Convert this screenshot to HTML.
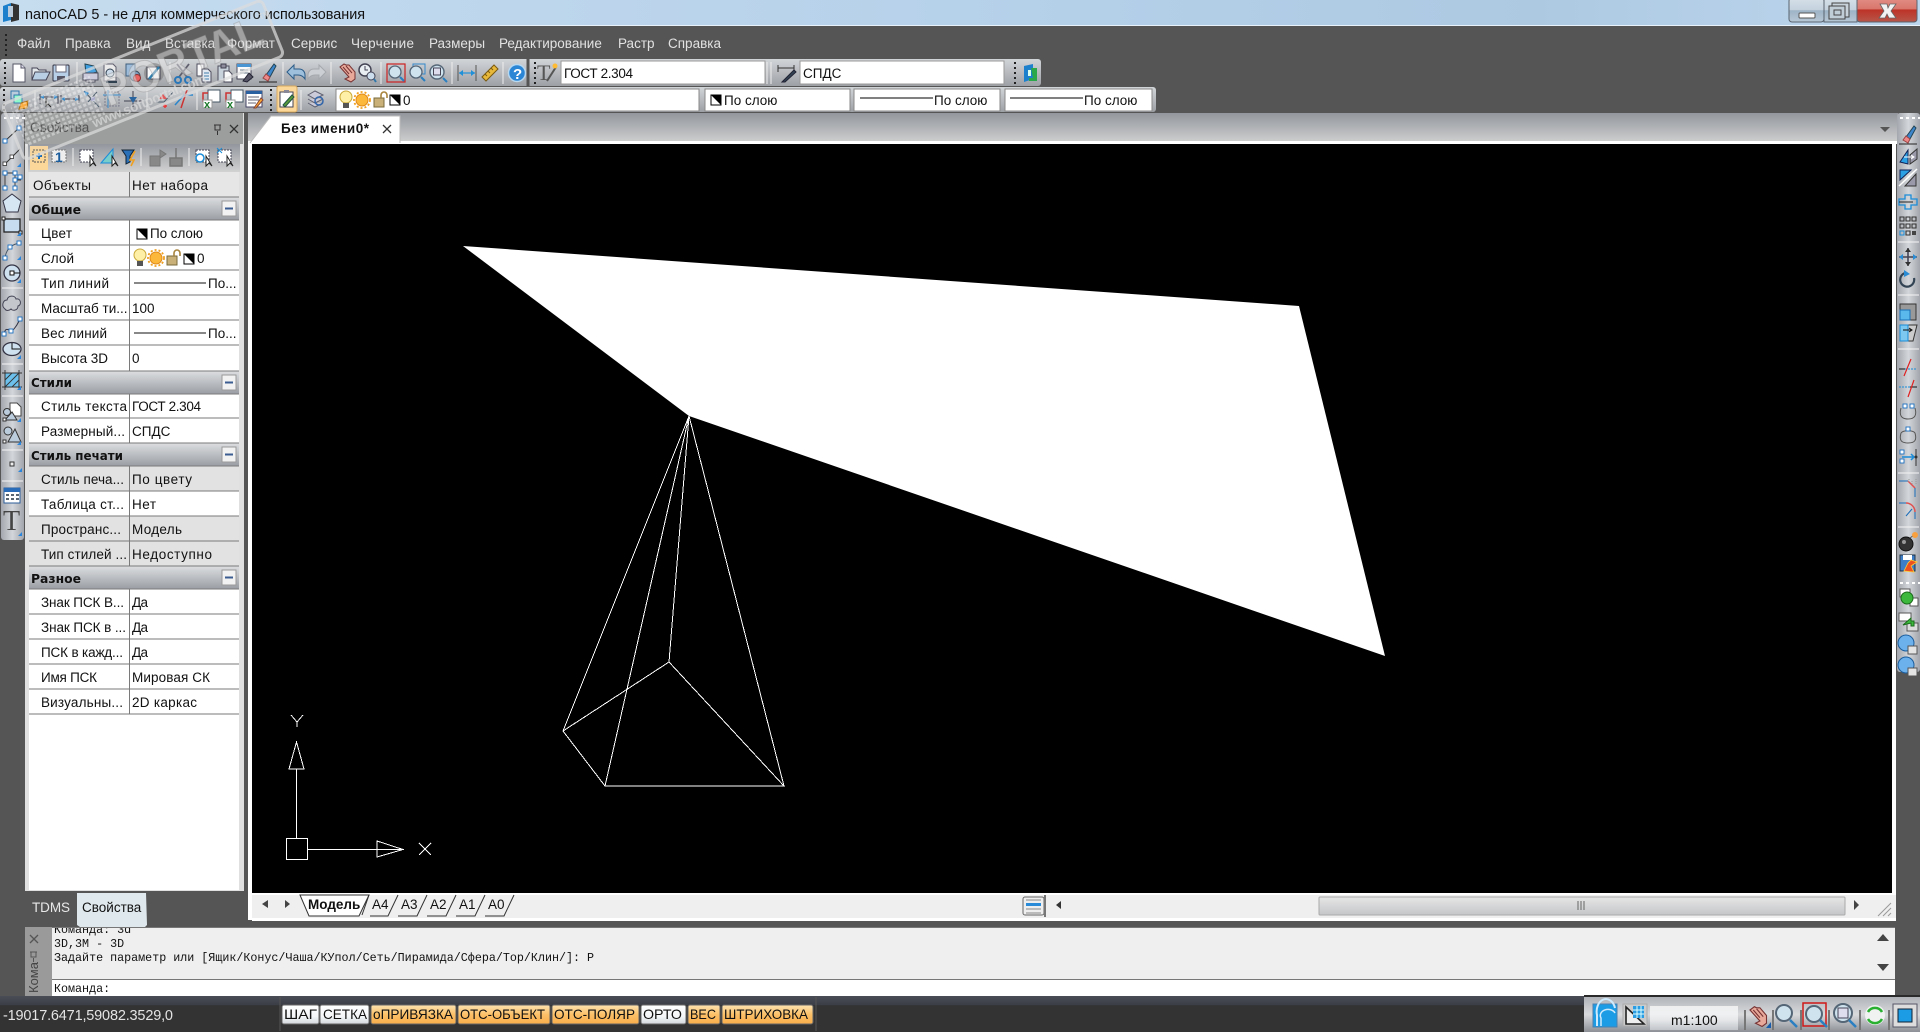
<!DOCTYPE html>
<html lang="ru"><head><meta charset="utf-8"><title>nanoCAD 5</title>
<style>
html,body{margin:0;padding:0;background:#555;overflow:hidden}
svg{display:block;position:absolute;left:0;top:0}
text{font-family:"Liberation Sans","Noto Sans CJK SC",sans-serif;font-size:13.5px;fill:#111}
.m{fill:#e2e2e2;font-size:13.5px}
.h{font-family:"DejaVu Sans",sans-serif;font-weight:bold;font-size:12.5px;fill:#111}
.c{font-family:"Liberation Mono",monospace;font-size:11.7px;fill:#111}
.s{font-size:14px;fill:#111}
.w{stroke:#fff;fill:none;stroke-width:1}
</style></head><body>
<svg width="1920" height="1032" viewBox="0 0 1920 1032" xmlns="http://www.w3.org/2000/svg">
<defs>
<linearGradient id="tb" x1="0" y1="0" x2="0" y2="1"><stop offset="0" stop-color="#d2d5d8"/><stop offset="1" stop-color="#9da0a5"/></linearGradient>
<linearGradient id="vb" x1="0" y1="0" x2="1" y2="0"><stop offset="0" stop-color="#a4a8ae"/><stop offset=".5" stop-color="#d3d6da"/><stop offset="1" stop-color="#a2a6ac"/></linearGradient>
<linearGradient id="dt" x1="0" y1="0" x2="0" y2="1"><stop offset="0" stop-color="#93979d"/><stop offset="1" stop-color="#d2d2d2"/></linearGradient>
<linearGradient id="hd" x1="0" y1="0" x2="0" y2="1"><stop offset="0" stop-color="#dcdee0"/><stop offset="1" stop-color="#9a9ea4"/></linearGradient>
<linearGradient id="or" x1="0" y1="0" x2="0" y2="1"><stop offset="0" stop-color="#fde3b0"/><stop offset=".5" stop-color="#fbc068"/><stop offset="1" stop-color="#f9ae4a"/></linearGradient>
<linearGradient id="wh" x1="0" y1="0" x2="0" y2="1"><stop offset="0" stop-color="#fff"/><stop offset=".6" stop-color="#f4f6f8"/><stop offset="1" stop-color="#d4d8dc"/></linearGradient>
<linearGradient id="cl" x1="0" y1="0" x2="0" y2="1"><stop offset="0" stop-color="#e28f86"/><stop offset=".45" stop-color="#d9766c"/><stop offset=".5" stop-color="#bd3328"/><stop offset="1" stop-color="#b8564a"/></linearGradient>
<linearGradient id="wb" x1="0" y1="0" x2="0" y2="1"><stop offset="0" stop-color="#d6e0e8"/><stop offset=".5" stop-color="#c4d2de"/><stop offset=".52" stop-color="#9db3c6"/><stop offset="1" stop-color="#b8c8d6"/></linearGradient>
<linearGradient id="ti" x1="0" y1="0" x2="1" y2="0"><stop offset="0" stop-color="#c6dcef"/><stop offset=".5" stop-color="#b6d1ea"/><stop offset=".8" stop-color="#adc9e2"/><stop offset="1" stop-color="#bcd6ed"/></linearGradient>
<linearGradient id="st" x1="0" y1="0" x2="0" y2="1"><stop offset="0" stop-color="#4a4d55"/><stop offset=".25" stop-color="#3b3e46"/><stop offset=".26" stop-color="#333"/><stop offset="1" stop-color="#333"/></linearGradient>
<linearGradient id="sr" x1="0" y1="0" x2="0" y2="1"><stop offset="0" stop-color="#b0b3b8"/><stop offset=".5" stop-color="#d8dadc"/><stop offset="1" stop-color="#8d9096"/></linearGradient>
<linearGradient id="sc" x1="0" y1="0" x2="0" y2="1"><stop offset="0" stop-color="#e6e6e6"/><stop offset="1" stop-color="#c4c6c8"/></linearGradient>
<pattern id="dots" width="5" height="5" patternUnits="userSpaceOnUse"><rect width="3" height="3" fill="#fff" opacity=".7"/></pattern>

<g id="doc"><path d="M-6-9H2L6-5V9H-6Z" fill="#fff" stroke="#556"/><path d="M2-9V-5H6" fill="#dde" stroke="#556"/></g>
<g id="open"><path d="M-9 7V-5H-4L-2-3H5V0" fill="#e5e8ea" stroke="#445"/><path d="M-9 7L-6-1H9L5 7Z" fill="#b9cfe4" stroke="#445"/></g>
<g id="save"><rect x="-8" y="-8" width="16" height="16" rx="1" fill="#b8cfe8" stroke="#334"/><rect x="-5" y="-8" width="10" height="7" fill="#fff" stroke="#667"/><rect x="-4" y="3" width="8" height="5" fill="#556"/></g>
<g id="print"><path d="M-6-9L3-7 6-1-5 2Z" fill="#3d9ee0" stroke="#245"/><rect x="-8" y="0" width="15" height="7" fill="#ccd" stroke="#445"/><path d="M-5 7H4V9H-5Z" fill="#fff" stroke="#445"/></g>
<g id="prev"><path d="M-6-9H3L6-6V8H-6Z" fill="#eee" stroke="#556"/><circle cx="0" cy="0" r="4" fill="#cde" stroke="#234"/><path d="M-4 9H7" stroke="#234" stroke-width="2"/></g>
<g id="pub"><rect x="-7" y="-9" width="9" height="12" fill="#9bd" stroke="#357"/><circle cx="2" cy="3" r="5" fill="#79b" stroke="#345"/><circle cx="4" cy="5" r="3.5" fill="#e55" stroke="#822"/></g>
<g id="plot"><circle r="10" fill="#777" opacity=".6"/><rect x="-7" y="-6" width="13" height="12" fill="#fff" stroke="#334"/><path d="M-5 6L5-6" stroke="#27a" stroke-width="2.5"/></g>
<g id="cut"><path d="M-6-9L4 4M6-9L-4 4" stroke="#556" stroke-width="1.8" fill="none"/><circle cx="-5" cy="7" r="3" fill="none" stroke="#1a70b8" stroke-width="2"/><circle cx="5" cy="7" r="3" fill="none" stroke="#1a70b8" stroke-width="2"/></g>
<g id="copy"><path d="M-7-9H0V3H-7Z" fill="#fff" stroke="#445"/><path d="M-2-4H4L7-1V9H-2Z" fill="#e6eef6" stroke="#445"/><path d="M0 0H5M0 3H5M0 6H5" stroke="#37a"/></g>
<g id="paste"><rect x="-7" y="-7" width="11" height="15" fill="#c9d3dd" stroke="#445"/><rect x="-4" y="-9" width="5" height="4" fill="#889" stroke="#334"/><path d="M-1-2H4L7 1V9H-1Z" fill="#fff" stroke="#445"/></g>
<g id="match"><rect x="-8" y="-9" width="14" height="15" fill="#fff" stroke="#445"/><rect x="-8" y="-9" width="14" height="3" fill="#3d8fd4"/><path d="M-5-3H3M-5 0H3" stroke="#678"/><path d="M-2 8L4 0 8 4 2 9Z" fill="#556" stroke="#223"/></g>
<g id="brush"><path d="M-2 2L6-9 8-7 2 4Z" fill="#3d86cc" stroke="#245"/><path d="M-5 5L-2 1 2 4 0 8Z" fill="#e88" stroke="#944"/><path d="M-9 9H9" stroke="#222"/></g>
<g id="undo"><path d="M-9-1L-2-8V-4H3C7-4 9-1 9 2V6C7 3 5 2 2 2H-2V6Z" fill="#9fc0dc" stroke="#2c5c88"/></g>
<g id="redo"><path d="M9-1L2-8V-4H-3C-7-4-9-1-9 2V6C-7 3-5 2-2 2H2V6Z" fill="#ccd0d4" stroke="#a5a9ae"/></g>
<g id="pan"><path d="M-7-6L2 4 -2 6 4 9 8 6 8-1 2-8-1-8-3-9Z" fill="#e8a89a" stroke="#733"/><path d="M-4-6L2 1M-1-7L5 0" stroke="#733"/></g>
<g id="zrt"><circle cx="-2" cy="-3" r="6" fill="#e8eef2" stroke="#445" stroke-width="1.5"/><path d="M-2-7V-3H1" stroke="#445" fill="none"/><circle cx="4" cy="3" r="4" fill="#cde" stroke="#445"/><path d="M7 6L9 9" stroke="#37a" stroke-width="2"/></g>
<g id="zw"><rect x="-9" y="-9" width="18" height="18" fill="none" stroke="#c22" stroke-width="1.2"/><circle cx="-1" cy="-1" r="6" fill="#cfe3ef" stroke="#567" stroke-width="1.3"/><path d="M4 4L8 8" stroke="#2a7fc0" stroke-width="2"/></g>
<g id="zp"><rect x="-4" y="-9" width="12" height="10" fill="none" stroke="#38c"/><circle cx="-1" cy="-1" r="6" fill="#cfe3ef" stroke="#567" stroke-width="1.3"/><path d="M4 4L8 8" stroke="#2a7fc0" stroke-width="2"/></g>
<g id="ze"><circle cx="-1" cy="-1" r="7" fill="#cfe3ef" stroke="#567" stroke-width="1.4"/><rect x="-4.500" y="-5" width="7" height="7" fill="#dde" stroke="#445"/><path d="M5 5L9 9" stroke="#2a7fc0" stroke-width="2"/></g>
<g id="dist"><path d="M-9-8V8M9-8V8" stroke="#555"/><path d="M-8 0H8" stroke="#2090d8" stroke-width="1.200"/><path d="M-8 0L-4-3V3ZM8 0L4-3V3Z" fill="#2090d8"/></g>
<g id="ruler"><path d="M-8 4L4-8 8-4-4 8Z" fill="#e8b83a" stroke="#7a5a12"/><path d="M-5 1L-3 3M-2-2L0 0M1-5L3-3" stroke="#7a5a12"/></g>
<g id="help"><circle r="8.500" fill="#2c86d6" stroke="#b8d8f0" stroke-width="1.500"/><text x="-4" y="6" style="font-size:15px;font-weight:bold;fill:#fff">?</text></g>
<g id="tstyle"><text x="-10" y="7" style="font-family:'Liberation Serif',serif;font-size:22px;fill:#555">T</text><path d="M0 8L9-6" stroke="#555" stroke-width="2"/><circle cx="8" cy="-7" r="2.500" fill="#fb3"/></g>
<g id="dstyle"><path d="M-9-8V-1M7-8V-1M-9-5H7" stroke="#333" fill="none"/><path d="M-5 9L7-3 9-1-2 9Z" fill="#345" stroke="#223"/></g>
<g id="ncad"><path d="M-6-7L3-9V6L-6 9Z" fill="#1c80cc"/><path d="M1-5H7V8H-1V5H3Z" fill="#2aa84a"/><rect x="-2" y="-3" width="3" height="6" fill="#dfe"/></g>
<g id="layers"><rect x="-8" y="-9" width="8" height="8" fill="#bcd" stroke="#37a"/><rect x="-5" y="-5" width="8" height="8" fill="#8fc" stroke="#37a"/><path d="M2 3L9 1 8 8 0 9Z" fill="#fa3" stroke="#a60"/></g>
<g id="d1"><path d="M-9-5V5M9-5V5M-9 -2H9" stroke="#334" fill="none"/><path d="M-9-2L-5-4V0ZM9-2L5-4V0Z" fill="#2a86cc"/><path d="M-3-1V7L-1 5 2 8" stroke="#111" fill="#ccc"/></g>
<g id="d2"><path d="M-9-4V4M9-4V4M-9 0H9" stroke="#334" fill="none"/><path d="M-9 0L-5-2V2ZM9 0L5-2V2Z" fill="#2a86cc"/></g>
<g id="d3"><path d="M-8-8L7 8M-4 3L5-7" stroke="#456" fill="none"/><path d="M-8-8L-3-6-6-3Z" fill="#2a86cc"/><rect x="-1" y="-2" width="4" height="4" fill="#aac"/></g>
<g id="d4"><rect x="-7" y="-7" width="14" height="14" fill="none" stroke="#778" stroke-dasharray="2 1"/><path d="M-9-4H9M-4-9V9" stroke="#2a86cc"/></g>
<g id="d5"><path d="M-9 2H9M0-8V8" stroke="#334" fill="none"/><path d="M-4-2L4-2 0 4Z" fill="#1c5c9c"/></g>
<g id="d6"><path d="M-9 3H-1L8-7" stroke="#456" fill="none"/><path d="M-2-5L2 0-6 0Z" fill="#e33" opacity=".8"/><path d="M0 5V9M-2 7H2" stroke="#e33" stroke-width="1.500"/></g>
<g id="d7"><path d="M-9 6L0-4 9-4" stroke="#2a86cc" fill="none" stroke-width="1.500"/><path d="M3-9L-3 9" stroke="#c33" stroke-width="1.500"/></g>
<g id="xl"><rect x="-4" y="-9" width="12" height="12" fill="#fff" stroke="#456"/><path d="M-9 3V-6H-4" stroke="#c33" fill="none" stroke-width="1.500"/><rect x="-9" y="1" width="9" height="8" fill="#fff" stroke="#999"/><text x="-8" y="9" style="font-size:11px;font-weight:bold;fill:#1a7a2a">x</text></g>
<g id="tb1"><rect x="-8" y="-8" width="16" height="16" fill="#fff" stroke="#446"/><rect x="-8" y="-8" width="16" height="3" fill="#2a60a0"/><path d="M-6-2H5M-6 1H5M-6 4H2" stroke="#667"/><path d="M0 9L7-1 9 1 2 9Z" fill="#fa3" stroke="#843"/></g>
<g id="note"><rect x="-10" y="-13" width="20" height="26" rx="2" fill="#fbd89a" stroke="#d8a860"/><rect x="-7" y="-7" width="13" height="15" fill="#fff" stroke="#445"/><rect x="-3" y="-9" width="5" height="3" fill="#889"/><path d="M-4 6L5-4 7-2-2 8Z" fill="#5a9a3a" stroke="#254"/></g>
<g id="lst"><path d="M-7-4L0-8 8-4 0 0Z M-7 0L0 4 8 0 M-7 4L0 8 8 4" fill="#ccd" stroke="#556" opacity=".9"/><circle cx="4" cy="2" r="4" fill="none" stroke="#3366aa" stroke-width="1.500"/></g>
<g id="bulb"><circle cy="-3" r="6" fill="#fff0a8" stroke="#c8a838"/><rect x="-3" y="3" width="6" height="5" fill="#555"/></g>
<g id="sun"><circle r="6" fill="#fbb83a" stroke="#e08818"/><circle r="8" fill="none" stroke="#f0a020" stroke-width="1.800" stroke-dasharray="2 2"/></g>
<g id="lock"><rect x="-6" y="-2" width="10" height="9" fill="#c8b078" stroke="#7a6a3a"/><path d="M1-2V-5A3 3 0 0 1 7-5V-2" fill="none" stroke="#a8843c" stroke-width="1.600"/></g>
<g id="cs"><rect x="-5" y="-5" width="10" height="10" fill="#fff" stroke="#000"/><path d="M-5-5H5V5Z" fill="#000"/></g>
<g id="gripV"><path d="M0 0V2M0 5V7M0 10V12M0 15V17M0 20V22" stroke="#222" stroke-width="2"/></g>
<g id="gripH"><path d="M0 0H3M6 0H9M12 0H15M18 0H21" stroke="#fff" stroke-width="2"/></g>
<g id="pt"><rect x="-2" y="-2" width="4" height="4" fill="#fff" stroke="#1b6fc0" stroke-width=".9"/></g>
<g id="corn"><path d="M0 0L-4 0 0-4Z" fill="#2a86dc" transform="translate(9,10)"/></g>

<g id="l-line"><path d="M-7 7L7-6" stroke="#333"/><use href="#pt" x="-7" y="7"/><use href="#pt" x="7" y="-6"/></g>
<g id="l-ray"><path d="M-7 7L8-8" stroke="#333"/><rect x="-9" y="5" width="3.500" height="3.500" fill="#fff" stroke="#333" stroke-width=".8"/><rect x="-2" y="-2" width="3.500" height="3.500" fill="#fff" stroke="#333" stroke-width=".8"/><use href="#corn"/></g>
<g id="l-pl"><path d="M-7 8V-7H3V0H9M3 0V8" fill="none" stroke="#333" stroke-width=".9"/><use href="#pt" x="-7" y="8"/><use href="#pt" x="-7" y="-7"/><use href="#pt" x="3" y="-7"/><use href="#pt" x="3" y="0"/><use href="#pt" x="8" y="-3"/><use href="#pt" x="3" y="8"/></g>
<g id="l-poly"><path d="M0-9L9-2 6 9H-6L-9-2Z" fill="#d6e6f2" stroke="#334"/></g>
<g id="l-rect"><rect x="-8" y="-7" width="16" height="13" fill="#c8dcef" stroke="#222" stroke-width="1.300"/><rect x="-10" y="-9" width="3" height="3" fill="#fff" stroke="#222"/><rect x="7" y="5" width="3" height="3" fill="#fff" stroke="#222"/><use href="#corn"/></g>
<g id="l-arc"><path d="M-7 8C-6-1 0-6 8-7" fill="none" stroke="#456" stroke-width=".9"/><use href="#pt" x="-7" y="8"/><use href="#pt" x="-2" y="-3"/><use href="#pt" x="7" y="-7"/><use href="#corn"/></g>
<g id="l-cir"><circle r="8" fill="#cfe0ee" stroke="#334" stroke-width="1.300"/><path d="M0 0H8" stroke="#111"/><rect x="-2" y="-2" width="4" height="4" fill="#fff" stroke="#111"/><use href="#corn"/></g>
<g id="l-cloud"><path d="M-7 6C-11 3-9-3-5-3-4-8 3-8 4-4 9-5 10 2 6 3 6 8 0 8-1 6-3 8-6 8-7 6Z" fill="#c4c8cc" stroke="#445"/></g>
<g id="l-spl"><path d="M-8 8C-6-2-2 8 2 3S6-3 8-7" fill="none" stroke="#334"/><use href="#pt" x="-8" y="8"/><use href="#pt" x="-1" y="5"/><use href="#pt" x="8" y="-7"/></g>
<g id="l-ell"><ellipse rx="9" ry="6.500" fill="#cfe0ee" stroke="#334" stroke-width="1.300"/><path d="M0-6V0H8" stroke="#111" fill="none"/><use href="#corn"/></g>
<g id="l-hat"><rect x="-7" y="-7" width="14" height="14" fill="#6cc0ec" stroke="#222"/><path d="M-7 0L0-7M-7 7L7-7M0 7L7 0M-10-7H10M-10 7H10M-7-10V10M7-10V10" stroke="#333" stroke-width=".9"/><use href="#corn"/></g>
<g id="l-blk"><path d="M-2-9H5L9-5V4H-2Z" fill="#fff" stroke="#444"/><circle cx="-5" cy="0" r="3.500" fill="#bcd" stroke="#333"/><path d="M-7 8L0 0 5 8Z" fill="#bcd" stroke="#333"/><rect x="-9" y="6" width="3" height="3" fill="#fff" stroke="#333"/><use href="#corn"/></g>
<g id="l-ins"><circle cx="-4" cy="-4" r="4" fill="#bcd" stroke="#333"/><path d="M-4 7L3-6 9 7Z" fill="#bcd" stroke="#333"/><rect x="-9" y="5" width="3" height="3" fill="#fff" stroke="#333"/><use href="#corn"/></g>
<g id="l-tab"><rect x="-8" y="-8" width="16" height="15" fill="#fff" stroke="#2a5c9a"/><rect x="-8" y="-8" width="16" height="4" fill="#2a6cb8"/><path d="M-6-1H-3M-1-1H2M4-1H7M-6 3H-3M-1 3H2M4 3H7" stroke="#234" stroke-width="1.500"/></g>

<g id="r-mir"><path d="M-8 5L0-7V7Z" fill="#2ba0e4" stroke="#125"/><path d="M9-8L2-2V7L9 2Z" fill="#99a" stroke="#333"/><path d="M-4 0H6M3-2L6 0 3 2" stroke="#fff" fill="none"/></g>
<g id="r-off"><path d="M-8 2L3-8H-8Z" fill="#2ba0e4" stroke="#125"/><path d="M8-4L-3 8H8Z" fill="#99a" stroke="#333"/><path d="M-9 8L9-9" stroke="#fff" stroke-width="1.500"/></g>
<g id="r-cp"><path d="M-9-3H-3V-7H3V-3H9V3H3V7H-3V3H-9Z" fill="none" stroke="#1a8cd8" stroke-width="1.300"/><path d="M-9 0H5" stroke="#222"/></g>
<g id="r-arr"><path d="M-8-8h4v4h-4ZM-2-8h4v4h-4ZM4-8h4v4h-4ZM-8-1h4v4h-4ZM-2-1h4v4h-4ZM4-1h4v4h-4ZM-2 6h4v4h-4Z" fill="none" stroke="#333" transform="translate(0,-1)" stroke-width="1.100"/><rect x="-8" y="5" width="4" height="4" fill="none" stroke="#1a8cd8"/><rect x="4" y="5" width="4" height="4" fill="#444"/></g>
<g id="r-mv"><path d="M-9 0H9M0-9V9" stroke="#445" stroke-width="1.600"/><path d="M-9 0L-5-3V3ZM9 0L5-3V3Z" fill="#2a8cd4"/><path d="M0-9L-3-5H3ZM0 9L-3 5H3Z" fill="#333"/></g>
<g id="r-rot"><path d="M-3-7A7 7 0 1 0 6-2" fill="none" stroke="#345" stroke-width="2.200"/><path d="M-4-10V-3L2-6Z" fill="#2a8cd4"/></g>
<g id="r-sc"><rect x="-8" y="-8" width="16" height="16" fill="#999" stroke="#333"/><rect x="-8" y="-2" width="10" height="10" fill="#5ab8ec" stroke="#1a70b8"/></g>
<g id="r-str"><path d="M-8-8H9L5 8H-8Z" fill="#ccc" stroke="#333"/><rect x="-8" y="-8" width="8" height="16" fill="#7cc8f0" stroke="#1a8cd8"/><path d="M-5-3H4M1-5L4-3 1-1" stroke="#111" fill="none"/></g>
<g id="r-trim"><path d="M-9 2H-3" stroke="#111"/><path d="M-3 2H9" stroke="#1a8cd8" stroke-dasharray="2 1"/><path d="M-4 9L3-8" stroke="#e02020" stroke-width="1.200"/></g>
<g id="r-ext"><path d="M-9-1H2" stroke="#1a8cd8" stroke-dasharray="2 1"/><path d="M2-1H9" stroke="#111"/><path d="M0 9L6-8" stroke="#e02020" stroke-width="1.200"/></g>
<g id="r-br1"><path d="M-7-4C-9 3-7 7 0 7S9 3 7-4" fill="none" stroke="#555"/><use href="#pt" x="-3" y="-6"/><use href="#pt" x="4" y="-6"/></g>
<g id="r-br2"><path d="M-7-2C-9 5-7 8 0 8S9 5 7-2C5-5-5-5-7-2" fill="none" stroke="#555"/><use href="#pt" x="0" y="-6"/></g>
<g id="r-join"><path d="M8-8V9" stroke="#333"/><path d="M-6 0H6M3-3L6 0 3 3" stroke="#1a8cd8" stroke-width="1.500" fill="none"/><use href="#pt" x="-6" y="-5"/><use href="#pt" x="-6" y="4"/><circle cx="8" cy="0" r="1.500" fill="#333"/></g>
<g id="r-cha"><path d="M-9-7H0" stroke="#1a6cb8"/><path d="M0-7L7 0" stroke="#e05050" stroke-width="1.500"/><path d="M7 0V9" stroke="#1a6cb8"/><path d="M1-9V-5M4-7V-3M8-9V-4" stroke="#999" stroke-dasharray="1 1"/></g>
<g id="r-fil"><path d="M-9-7H-2" stroke="#1a6cb8"/><path d="M-2-7A9 9 0 0 1 7 2" stroke="#e05050" fill="none" stroke-width="1.500"/><path d="M7 2V9" stroke="#1a6cb8"/><path d="M-2 6L4-1" stroke="#1a6cb8"/></g>
<g id="r-bomb"><circle cx="-2" cy="2" r="7" fill="#333" stroke="#111"/><circle cx="-4" cy="0" r="2" fill="#999"/><path d="M2-4L6-7" stroke="#555"/><circle cx="7" cy="-7" r="3" fill="#f8a040"/></g>
<g id="r-exp"><rect x="-8" y="-8" width="15" height="16" fill="#3d7ec8" stroke="#234"/><rect x="-5" y="-8" width="9" height="5" fill="#fff"/><path d="M-4 8L0 0 3-3 9-1 3 3 6 9Z" fill="#ec5020" stroke="#fc3" stroke-width=".8"/></g>
<g id="r-g1"><rect x="-8" y="-9" width="10" height="8" fill="#fff" stroke="#555"/><rect x="2" y="0" width="8" height="8" fill="#fff" stroke="#555"/><circle cx="-1" cy="0" r="6" fill="#3cb83c" stroke="#1a6a1a"/></g>
<g id="r-g2"><rect x="-9" y="-9" width="12" height="8" fill="#fff" stroke="#555"/><rect x="-1" y="1" width="11" height="8" fill="#ddd" stroke="#555"/><path d="M-5 3L3-4V-1H6V4H3V1Z" fill="#3cb83c" stroke="#1a6a1a"/></g>
<g id="r-b1"><circle cx="-2" cy="-2" r="8" fill="#6cb0ec" stroke="#1a5c9c"/><rect x="0" y="1" width="9" height="8" fill="#e4e4e4" stroke="#555"/></g>

<g id="ts-mod"><rect x="-12" y="-11" width="24" height="23" fill="#1c9ce4" stroke="#4a80b0"/><path d="M-8 11V0A6 8 0 0 1 10-7" fill="none" stroke="#cfeafc" stroke-width="2"/><path d="M-4 11V3A5 4 0 0 1 10-2" fill="none" stroke="#cfeafc" stroke-width="1.500"/></g>
<g id="ts-grid"><rect x="-12" y="-11" width="24" height="22" fill="#ccc" stroke="#aaa"/><path d="M-9-8V9H9Z" fill="#eee" stroke="#222" stroke-width="1.600"/><rect x="-2" y="-9" width="11" height="12" fill="#2a9ce4"/><path d="M2-9V3M6-9V3M-2-5H9M-2-1H9" stroke="#dff"/></g>
</defs>

<!-- base -->
<rect width="1920" height="1032" fill="#555"/>
<!-- title bar -->
<rect width="1920" height="25" fill="url(#ti)"/>
<rect y="25" width="1920" height="1" fill="#e8f2fa"/>
<path d="M3 6L11 3V20L3 22Z" fill="#1c80cc"/><path d="M11 3L19 5V20L11 22Z" fill="#333"/><rect x="8" y="6" width="5" height="11" fill="#bcd"/>
<text x="25" y="19" style="font-size:14.4px;fill:#111">nanoCAD 5 - не для коммерческого использования</text>
<rect x="1789" y="-2" width="35" height="24" rx="3" fill="url(#wb)" stroke="#5a6470"/>
<rect x="1824" y="-2" width="33" height="24" fill="url(#wb)" stroke="#5a6470"/>
<rect x="1857" y="-2" width="60" height="24" rx="3" fill="url(#cl)" stroke="#5a6470"/>
<rect x="1799" y="13" width="16" height="5" rx="1" fill="#fff" stroke="#555"/>
<rect x="1832" y="3" width="17" height="14" fill="#c8d2da" stroke="#444"/><rect x="1829" y="6" width="16" height="13" fill="#c0ccd6" stroke="#444"/><rect x="1834" y="10" width="7" height="5" fill="none" stroke="#444"/>
<path d="M1880 4H1887L1888 8 1890 4H1896L1891 11 1896 18H1889L1887 14 1885 18H1879L1884 11Z" fill="#f2f2f2" stroke="#666" stroke-width=".8"/>

<!-- menu -->
<use href="#gripV" x="6" y="34"/>
<text class="m" x="17" y="48">Файл</text>
<text class="m" x="65" y="48">Правка</text>
<text class="m" x="126" y="48">Вид</text>
<text class="m" x="165" y="48">Вставка</text>
<text class="m" x="227" y="48">Формат</text>
<text class="m" x="291" y="48">Сервис</text>
<text class="m" x="351" y="48" textLength="63">Черчение</text>
<text class="m" x="429" y="48">Размеры</text>
<text class="m" x="499" y="48">Редактирование</text>
<text class="m" x="618" y="48">Растр</text>
<text class="m" x="668" y="48">Справка</text>

<!-- toolbar 1 -->
<rect x="0" y="59" width="1041" height="27" rx="3" fill="url(#tb)"/>
<rect x="561" y="61" width="204" height="23" fill="#fff" stroke="#999"/>
<rect x="800" y="61" width="204" height="23" fill="#fff" stroke="#999"/>
<path d="M77 62V84M170 62V84M283 62V84M331 62V84M381 62V84M452 62V84M503 62V84M767 62V84M771 62V84" stroke="#eee"/>
<path d="M528 59V86" stroke="#555" stroke-width="3"/>
<use href="#gripV" x="5" y="62"/><use href="#gripV" x="535" y="62"/><use href="#gripV" x="1015" y="62"/>
<use href="#doc" x="19" y="73"/><use href="#open" x="41" y="73"/><use href="#save" x="61" y="73"/>
<use href="#print" x="91" y="73"/><use href="#prev" x="110" y="73"/><use href="#pub" x="133" y="73"/><use href="#plot" x="154" y="73"/>
<use href="#cut" x="183" y="73"/><use href="#copy" x="204" y="73"/><use href="#paste" x="225" y="73"/><use href="#match" x="245" y="73"/><use href="#brush" x="268" y="73"/>
<use href="#undo" x="296" y="73"/><use href="#redo" x="317" y="73"/>
<use href="#pan" x="347" y="73"/><use href="#zrt" x="367" y="73"/>
<use href="#zw" x="396" y="73"/><use href="#zp" x="417" y="73"/><use href="#ze" x="438" y="73"/>
<use href="#dist" x="467" y="73"/><use href="#ruler" x="490" y="73"/>
<use href="#help" x="517" y="73"/><use href="#tstyle" x="547" y="73"/>
<text x="564" y="78" textLength="69">ГОСТ 2.304</text>
<use href="#dstyle" x="787" y="73"/>
<text x="803" y="78">СПДС</text>
<use href="#ncad" x="1030" y="73"/>

<!-- toolbar 2 -->
<rect x="0" y="87" width="1156" height="25" rx="3" fill="url(#tb)"/>
<rect x="336" y="89" width="363" height="22" fill="#fff" stroke="#888"/>
<rect x="705" y="89" width="145" height="22" fill="#fff" stroke="#888"/>
<rect x="854" y="89" width="146" height="22" fill="#fff" stroke="#888"/>
<rect x="1005" y="89" width="147" height="22" fill="#fff" stroke="#888"/>
<path d="M35 90V110M147 90V110M197 90V110M301 90V110" stroke="#eee"/>
<use href="#gripV" x="4" y="89"/><use href="#gripV" x="271" y="89"/>
<use href="#layers" x="19" y="100"/>
<use href="#d1" x="49" y="99"/><use href="#d2" x="70" y="99"/><use href="#d3" x="92" y="99"/><use href="#d4" x="112" y="99"/><use href="#d5" x="133" y="99"/>
<use href="#d6" x="165" y="99"/><use href="#d7" x="184" y="99"/>
<use href="#xl" x="212" y="99"/><use href="#xl" x="235" y="99"/><use href="#tb1" x="254" y="99"/>
<use href="#note" x="287" y="99"/><use href="#lst" x="315" y="99"/>
<use href="#bulb" x="346" y="100"/><use href="#sun" x="362" y="100"/><use href="#lock" x="380" y="100"/><use href="#cs" x="395" y="100"/>
<text x="403" y="105">0</text>
<use href="#cs" x="716" y="100"/><text x="724" y="105">По слою</text>
<path d="M860 98H933" stroke="#000"/><text x="934" y="105">По слою</text>
<path d="M1010 98H1083" stroke="#000"/><text x="1084" y="105">По слою</text>

<!-- document area -->
<rect x="248" y="113" width="1650" height="31" fill="url(#dt)"/>
<rect x="248" y="141" width="1650" height="3" fill="#fff"/>
<path d="M250 143L271 116H400V143Z" fill="#fff"/>
<path d="M250 143L271 116H400V143" fill="none" stroke="#bbb"/>
<text x="281" y="133" style="font-weight:bold;font-size:13.5px" textLength="88">Без имени0*</text>
<path d="M383 125L391 133M391 125L383 133" stroke="#333" stroke-width="1.300"/>
<path d="M1880 127H1890L1885 132Z" fill="#555"/>
<rect x="248" y="144" width="4" height="776" fill="#fff"/>
<rect x="1892" y="144" width="4" height="776" fill="#fff"/>
<!-- canvas -->
<rect x="252" y="144" width="1640" height="749" fill="#000"/>
<polygon points="463,246 1299,306 1385,656 689,416" fill="#fff"/>
<g shape-rendering="crispEdges">
<path class="w" d="M689 416L563 731L605 786L784 786L669 662L563 731M689 416L605 786M689 416L784 786M689 416L669 662"/>
<rect class="w" x="286.500" y="838.500" width="21" height="21"/>
<path class="w" d="M296.500 838V769M289 769H304L296.500 742ZM308 849.500H403M377 841L403 849.500L377 857ZM377 841V857"/>
<path class="w" d="M291 715L297 722L303 715M297 722V727M419 843L431 855M431 843L419 855"/>
</g>
<!-- layout tab row -->
<rect x="252" y="893" width="1644" height="2" fill="#fff"/>
<rect x="252" y="895" width="1644" height="23" fill="#efefef"/>
<rect x="252" y="918" width="1644" height="3" fill="#fff"/>
<path d="M262 904L268 900V908ZM290 904L285 900V908Z" fill="#444"/>
<path d="M300 895L309 916H359L369 895Z" fill="#fff" stroke="#333"/>
<path d="M369 895L362 915M370 916H388L398 895M398 916H417L427 895M427 916H446L456 895M456 916H475L485 895M485 916H504L514 895" fill="none" stroke="#333"/>
<text x="308" y="909" style="font-weight:bold;font-size:13.500px">Модель</text>
<text x="372" y="909">А4</text><text x="401" y="909">А3</text><text x="430" y="909">А2</text><text x="459" y="909">А1</text><text x="488" y="909">А0</text>
<rect x="1023" y="897" width="21" height="18" rx="2" fill="#eee" stroke="#666"/>
<rect x="1026" y="903" width="15" height="3" fill="#2a8cd8"/><path d="M1026 900H1041M1026 909H1041M1026 913H1041" stroke="#888"/>
<path d="M1045 895V917" stroke="#777" stroke-width="2"/>
<path d="M1056 905L1061 901V909Z" fill="#333"/>
<rect x="1319" y="897" width="526" height="18" rx="1" fill="url(#sc)" stroke="#aaa"/>
<path d="M1578 901V910M1581 901V910M1584 901V910" stroke="#666"/>
<path d="M1854 900L1859 905 1854 910Z" fill="#444"/>
<path d="M1878 916L1891 903M1883 916L1891 908M1888 916L1891 913" stroke="#999"/>

<!-- left toolbar -->
<rect x="1" y="113" width="23" height="427" rx="3" fill="url(#vb)"/>
<use href="#gripH" x="4" y="118"/>
<path d="M2 288H23M2 364H23M2 396H23M2 450H23M2 481H23" stroke="#f4f4f4"/>
<use href="#l-line" x="12" y="134"/><use href="#l-ray" x="12" y="157"/><use href="#l-pl" x="12" y="180"/><use href="#l-poly" x="12" y="203"/><use href="#l-rect" x="12" y="226"/><use href="#l-arc" x="12" y="250"/><use href="#l-cir" x="12" y="273"/>
<use href="#l-cloud" x="12" y="303"/><use href="#l-spl" x="12" y="326"/><use href="#l-ell" x="12" y="349"/>
<use href="#l-hat" x="12" y="380"/><use href="#l-blk" x="12" y="412"/><use href="#l-ins" x="12" y="435"/>
<rect x="10" y="462" width="4" height="4" fill="#eee" stroke="#333"/>
<use href="#l-tab" x="12" y="496"/>
<text x="3" y="530" style="font-family:'Liberation Serif',serif;font-size:28px;fill:#444">T</text>
<path d="M22 472L18 472 22 468ZM22 536L18 536 22 532Z" fill="#2a86dc"/>

<!-- properties panel -->
<rect x="25" y="113" width="219" height="778" fill="#e0e0e0"/>
<rect x="25" y="113" width="218" height="31" fill="#9c9e9e"/>
<text x="30" y="132" style="fill:#4a4a4a;font-size:13.5px">Свойства</text>
<path d="M214 125H221M215 125V130H220V125M217.500 131V135" stroke="#333" fill="none"/>
<path d="M230 125L238 133M238 125L230 133" stroke="#333" stroke-width="1.300"/>
<rect x="28" y="144" width="212" height="28" fill="url(#dt)"/>
<rect x="29" y="172" width="210" height="718" fill="#fff"/>
<rect x="30" y="146" width="18" height="24" fill="#fbd89a"/>
<g transform="translate(0,-2)">
<rect x="33" y="152" width="12" height="12" fill="none" stroke="#555" stroke-dasharray="2 1"/><path d="M36 158H42M39 155V161" stroke="#1a6cb8" stroke-width="2"/>
<rect x="52" y="152" width="14" height="12" fill="#eee" stroke="#777" stroke-dasharray="2 1"/><text x="55" y="164" style="font-weight:bold;font-size:14px;fill:#1a5c9c">1</text>
<rect x="80" y="152" width="13" height="12" fill="#fff" stroke="#445" stroke-dasharray="2 1"/><path d="M90 158V168L93 165 96 168Z" fill="#fff" stroke="#222"/>
<path d="M101 165L113 151V165Z" fill="#7cc" stroke="#1a8cd8"/><path d="M112 158V168L115 165 118 168Z" fill="#fff" stroke="#222"/>
<path d="M122 152H134L130 158V164L126 166V158Z" fill="#2a70b8" stroke="#123"/><path d="M135 153L130 162H134L131 168" stroke="#f0a020" stroke-width="1.600" fill="none"/>
<path d="M150 158H160V168H150ZM160 152L166 156 160 160Z" fill="#888" stroke="#777"/>
<path d="M170 160H182V168H170ZM176 150V160" fill="#888" stroke="#777" stroke-width="1.500"/>
<rect x="196" y="152" width="13" height="12" fill="#fff" stroke="#445" stroke-dasharray="2 1"/><circle cx="200" cy="160" r="4" fill="none" stroke="#1a8cd8" stroke-width="1.500"/><path d="M206 158V168L209 165 212 168Z" fill="#fff" stroke="#222"/>
<rect x="218" y="152" width="13" height="12" fill="#fff" stroke="#445" stroke-dasharray="2 1"/><path d="M217 150L222 155M222 150L217 155" stroke="#1a8cd8"/><path d="M227 158V168L230 165 233 168Z" fill="#fff" stroke="#222"/>
<path d="M73 150V168M141 150V168M189 150V168" stroke="#eee"/>
</g>

<!-- property shaded rows and headers -->
<rect x="29" y="172" width="210" height="25" fill="#e6e6e6"/>
<rect x="29" y="466" width="210" height="25" fill="#e2e2e2"/>
<rect x="29" y="516" width="210" height="50" fill="#e2e2e2"/>
<rect x="29" y="197" width="210" height="23" fill="url(#hd)"/>
<rect x="29" y="371" width="210" height="23" fill="url(#hd)"/>
<rect x="29" y="443" width="210" height="23" fill="url(#hd)"/>
<rect x="29" y="566" width="210" height="23" fill="url(#hd)"/>
<path d="M29 197H239M29 220H239M29 245H239M29 270H239M29 295H239M29 320H239M29 345H239M29 371H239M29 394H239M29 418H239M29 443H239M29 466H239M29 491H239M29 516H239M29 541H239M29 566H239M29 589H239M29 614H239M29 639H239M29 664H239M29 689H239M29 714H239" stroke="#7a7a7a" shape-rendering="crispEdges"/>
<path d="M129.500 172V197M129.500 220V371M129.500 394V443M129.500 466V566M129.500 589V714" stroke="#7a7a7a" shape-rendering="crispEdges"/>
<g fill="#f2f2f2" stroke="#999"><rect x="222" y="201" width="14" height="15"/><rect x="222" y="375" width="14" height="15"/><rect x="222" y="447" width="14" height="15"/><rect x="222" y="570" width="14" height="15"/></g>
<path d="M225 208.500H233M225 382.500H233M225 454.500H233M225 577.500H233" stroke="#3a5c90" stroke-width="2"/>
<text class="h" x="31" y="214" textLength="50" lengthAdjust="spacingAndGlyphs">Общие</text><text class="h" x="31" y="387" textLength="41" lengthAdjust="spacingAndGlyphs">Стили</text><text class="h" x="31" y="460" textLength="92" lengthAdjust="spacingAndGlyphs">Стиль печати</text><text class="h" x="31" y="583" textLength="50" lengthAdjust="spacingAndGlyphs">Разное</text>
<text x="33" y="190" textLength="58">Объекты</text><text x="132" y="190" textLength="76">Нет набора</text>
<text x="41" y="238" textLength="31">Цвет</text><use href="#cs" x="142" y="234"/><text x="150" y="238" textLength="53">По слою</text>
<text x="41" y="263" textLength="33">Слой</text><use href="#bulb" x="140" y="258"/><use href="#sun" x="156" y="258"/><use href="#lock" x="173" y="258"/><use href="#cs" x="189" y="259"/><text x="197" y="263">0</text>
<text x="41" y="288" textLength="68">Тип линий</text><path d="M134 283H206" stroke="#111"/><text x="208" y="288">По...</text>
<text x="41" y="313">Масштаб ти...</text><text x="132" y="313">100</text>
<text x="41" y="338" textLength="66">Вес линий</text><path d="M134 333H206" stroke="#111"/><text x="208" y="338">По...</text>
<text x="41" y="363" textLength="67">Высота 3D</text><text x="132" y="363">0</text>
<text x="41" y="411" textLength="86">Стиль текста</text><text x="132" y="411" textLength="69">ГОСТ 2.304</text>
<text x="41" y="436" textLength="84">Размерный...</text><text x="132" y="436">СПДС</text>
<text x="41" y="484" textLength="83">Стиль печа...</text><text x="132" y="484" textLength="60">По цвету</text>
<text x="41" y="509" textLength="83">Таблица ст...</text><text x="132" y="509" textLength="24">Нет</text>
<text x="41" y="534" textLength="80">Пространс...</text><text x="132" y="534" textLength="50">Модель</text>
<text x="41" y="559" textLength="86">Тип стилей ...</text><text x="132" y="559" textLength="80">Недоступно</text>
<text x="41" y="607" textLength="83">Знак ПСК В...</text><text x="132" y="607" textLength="16">Да</text>
<text x="41" y="632" textLength="85">Знак ПСК в ...</text><text x="132" y="632" textLength="16">Да</text>
<text x="41" y="657" textLength="82">ПСК в кажд...</text><text x="132" y="657" textLength="16">Да</text>
<text x="41" y="682" textLength="56">Имя ПСК</text><text x="132" y="682" textLength="78">Мировая СК</text>
<text x="41" y="707" textLength="82">Визуальны...</text><text x="132" y="707" textLength="65">2D каркас</text>

<!-- panel tabs -->
<text x="32" y="912" style="fill:#e8e8e8;font-size:13.500px" textLength="38">TDMS</text>
<path d="M77 893H146L147 925 145 927H80L77 925Z" fill="#dfe8ec"/>
<text x="82" y="912" style="font-size:13.500px">Свойства</text>

<!-- right toolbar -->
<rect x="1897" y="113" width="23" height="559" rx="3" fill="url(#vb)"/>
<use href="#gripH" x="1900" y="118"/><use href="#gripH" x="1900" y="583"/>
<path d="M1898 242H1919M1898 295H1919M1898 349H1919M1898 473H1919M1898 527H1919" stroke="#f4f4f4"/>
<use href="#brush" x="1908" y="135"/><use href="#r-mir" x="1908" y="157"/><use href="#r-off" x="1908" y="178"/><use href="#r-cp" x="1908" y="202"/><use href="#r-arr" x="1908" y="226"/>
<use href="#r-mv" x="1908" y="257"/><use href="#r-rot" x="1908" y="280"/><use href="#r-sc" x="1908" y="312"/><use href="#r-str" x="1908" y="333"/>
<use href="#r-trim" x="1908" y="367"/><use href="#r-ext" x="1908" y="388"/><use href="#r-br1" x="1908" y="412"/><use href="#r-br2" x="1908" y="435"/><use href="#r-join" x="1908" y="457"/>
<use href="#r-cha" x="1908" y="488"/><use href="#r-fil" x="1908" y="510"/><use href="#r-bomb" x="1908" y="542"/><use href="#r-exp" x="1908" y="563"/>
<use href="#r-g1" x="1908" y="598"/><use href="#r-g2" x="1908" y="622"/><use href="#r-b1" x="1908" y="645"/><use href="#r-b1" x="1908" y="667"/>

<!-- command window -->
<rect x="25" y="927" width="1870" height="69" fill="#efefef"/>
<rect x="25" y="927" width="1870" height="1" fill="#777"/>
<rect x="25" y="927" width="27" height="69" fill="#9a9a9a"/>
<path d="M30 935L38 943M38 935L30 943" stroke="#555" stroke-width="1.300"/>
<path d="M30 952H37M31 952V957H36V952M33.500 958V962" stroke="#555" fill="none"/>
<text transform="translate(38,993) rotate(-90)" style="font-size:13px;fill:#444">Кома</text>
<svg x="52" y="928" width="1790" height="50"><text class="c" x="2" y="5">Команда: 3d</text><text class="c" x="2" y="19">3D,3M - 3D</text><text class="c" x="2" y="33">Задайте параметр или [Ящик/Конус/Чаша/КУпол/Сеть/Пирамида/Сфера/Тор/Клин/]: P</text></svg>
<rect x="52" y="979" width="1843" height="1" fill="#777"/>
<rect x="52" y="980" width="1843" height="16" fill="#fff"/>
<text class="c" x="54" y="992">Команда:</text>
<path d="M1883 934L1889 941H1877ZM1877 964H1889L1883 971Z" fill="#444"/>

<!-- status bar -->
<rect y="996" width="1920" height="36" fill="url(#st)"/>
<text x="3" y="1020" style="fill:#e4e4e4;font-size:14.500px" textLength="170">-19017.6471,59082.3529,0</text>
<path d="M280 997V1031M816 997V1031" stroke="#555"/>
<g stroke="#666">
<rect x="282" y="1005" width="37" height="19" rx="2" fill="url(#wh)"/>
<rect x="320" y="1005" width="49" height="19" rx="2" fill="url(#wh)"/>
<rect x="371" y="1005" width="85" height="19" rx="2" fill="url(#or)"/>
<rect x="458" y="1005" width="92" height="19" rx="2" fill="url(#or)"/>
<rect x="552" y="1005" width="87" height="19" rx="2" fill="url(#or)"/>
<rect x="641" y="1005" width="45" height="19" rx="2" fill="url(#wh)"/>
<rect x="688" y="1005" width="32" height="19" rx="2" fill="url(#or)"/>
<rect x="722" y="1005" width="91" height="19" rx="2" fill="url(#or)"/>
</g>
<text class="s" x="284" y="1019" textLength="33" lengthAdjust="spacingAndGlyphs">ШАГ</text>
<text class="s" x="323" y="1019" textLength="44" lengthAdjust="spacingAndGlyphs">СЕТКА</text>
<text class="s" x="373" y="1019" textLength="80" lengthAdjust="spacingAndGlyphs">оПРИВЯЗКА</text>
<text class="s" x="460" y="1019" textLength="85" lengthAdjust="spacingAndGlyphs">ОТС-ОБЪЕКТ</text>
<text class="s" x="554" y="1019" textLength="81" lengthAdjust="spacingAndGlyphs">ОТС-ПОЛЯР</text>
<text class="s" x="643" y="1019" textLength="39" lengthAdjust="spacingAndGlyphs">ОРТО</text>
<text class="s" x="690" y="1019" textLength="26" lengthAdjust="spacingAndGlyphs">ВЕС</text>
<text class="s" x="724" y="1019" textLength="84" lengthAdjust="spacingAndGlyphs">ШТРИХОВКА</text>
<rect x="1584" y="997" width="336" height="35" fill="url(#sr)"/>
<path d="M1584 996H1920" stroke="#2a2a2a" stroke-width="2"/>
<use href="#ts-mod" x="1605" y="1015"/><use href="#ts-grid" x="1635" y="1015"/>
<rect x="1650" y="1006" width="88" height="24" fill="url(#wh)" opacity=".7"/>
<text x="1671" y="1025" style="font-size:14px">m1:100</text>
<path d="M1745 1010V1030M1773 1010V1030M1801 1010V1030M1829 1010V1030M1860 1010V1030M1889 1010V1030" stroke="#777" stroke-width="2"/>
<use href="#pan" x="1757" y="1016" transform="translate(-175,-101) scale(1.100)"/>
<path d="M1766 1028H1771V1022Z" fill="#1a5cac"/>
<circle cx="1784" cy="1013" r="8" fill="#cfe3ef" stroke="#567" stroke-width="2"/><path d="M1790 1020L1797 1027" stroke="#2a7fc0" stroke-width="2.500"/>
<rect x="1803" y="1003" width="23" height="23" fill="none" stroke="#d01818" stroke-width="1.500"/><circle cx="1814" cy="1014" r="8" fill="#cfe3ef" stroke="#567" stroke-width="2"/><path d="M1820 1020L1827 1027" stroke="#2a7fc0" stroke-width="2.500"/>
<circle cx="1843" cy="1013" r="9" fill="#cfe3ef" stroke="#567" stroke-width="2"/><rect x="1838" y="1008" width="10" height="10" fill="#dde" stroke="#445"/><path d="M1849 1020L1856 1027" stroke="#2a7fc0" stroke-width="2.500"/>
<circle cx="1875" cy="1015" r="10" fill="#f0f2f2"/><path d="M1868 1012A8 8 0 0 1 1882 1012M1882 1019A8 8 0 0 1 1868 1019" fill="none" stroke="#2ab030" stroke-width="2.500"/>
<rect x="1893" y="1004" width="24" height="23" fill="#ddd" stroke="#556"/><rect x="1898" y="1009" width="14" height="13" fill="#1c9ce4" stroke="#123"/>

<!-- watermark -->
<g transform="translate(143,80) rotate(-22)" opacity=".9">
<rect x="-140" y="-30" width="280" height="60" rx="5" fill="#c8c8c8" fill-opacity=".1" stroke="#dcdcdc" stroke-opacity=".8" stroke-width="3"/>
<rect x="-133" y="-24" width="85" height="42" fill="url(#dots)" opacity=".6"/>
<text x="-42" y="12" style="font-size:44px;font-weight:bold;fill:#e4e4e4;fill-opacity:.55;stroke:#888;stroke-opacity:.4" textLength="170" lengthAdjust="spacingAndGlyphs">PORTAL</text>
<text x="-63" y="26" style="font-size:13.500px;font-weight:bold;fill:#ddd;fill-opacity:.75" textLength="122">www.softportal.com</text>
<text x="131" y="-12" style="font-size:8px;fill:#ddd">TM</text>
</g>
</svg>
</body></html>
